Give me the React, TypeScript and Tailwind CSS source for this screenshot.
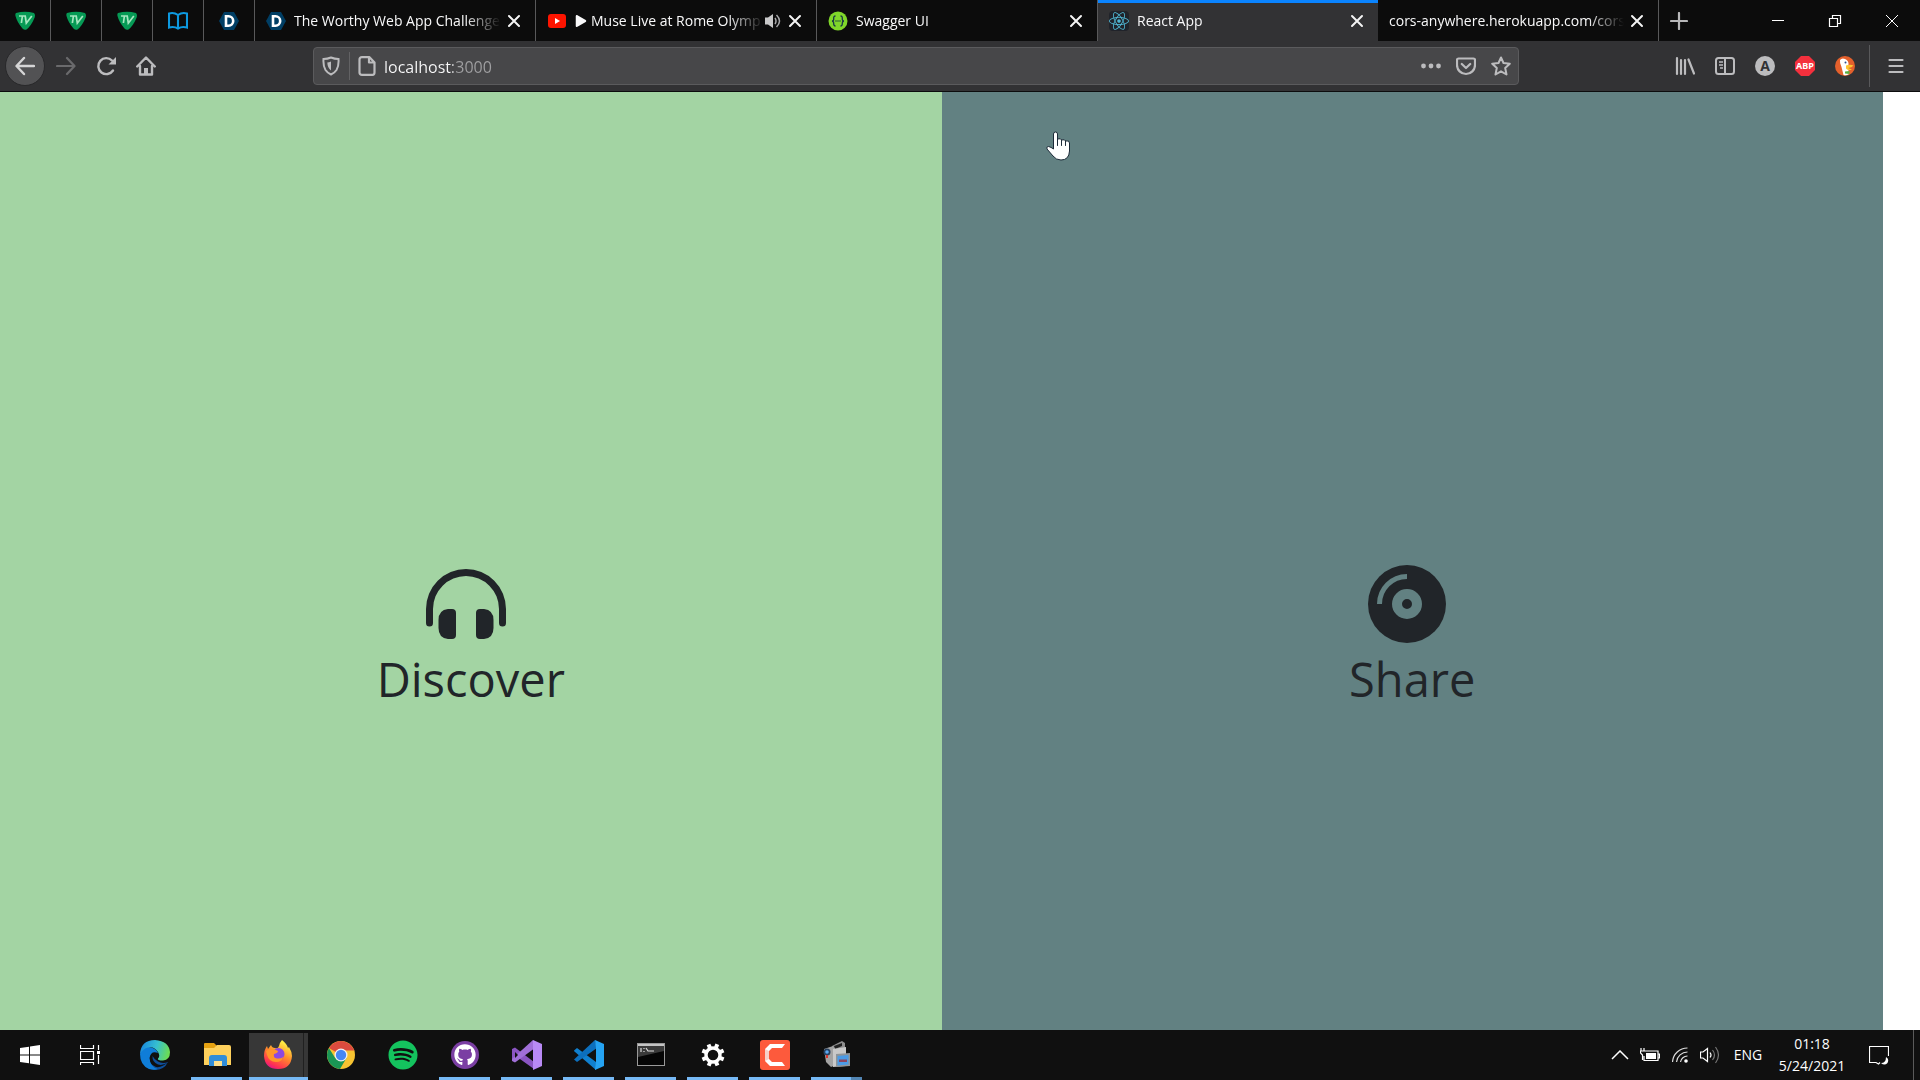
import type { ReactNode } from "react";
import { FaPlay, FaReact, FaSpotify, FaGithub } from "react-icons/fa";

function TvIcon() {
  return (
    <svg viewBox="0 0 20 20" className="size-5">
      <path d="M1 2Q10 -0.5 19 2Q21 4 19 8Q16 15 11.500 18.500Q9.500 19.500 7.500 17.500Q2 11 0.500 5Q0 3 1 2Z" fill="#069a55" />
      <path d="M4 5H11M7.400 5L6.400 12M10.300 5.500L11.300 12.200L16.800 5" fill="none" stroke="#a5e6c0" strokeWidth="1.700" />
    </svg>
  );
}

function BookIcon() {
  return (
    <svg viewBox="0 0 20 20" className="size-5" fill="none" stroke="#0d99e0" strokeWidth="2.100">
      <path d="M1 2.500Q6 1 10 4Q14 1 19 2.500V16.500Q14 15 10 17.500Q6 15 1 16.500ZM10 4V17" />
    </svg>
  );
}

function DevpostIcon() {
  return (
    <svg viewBox="0 0 20 20" className="size-5">
      <path d="M5 1H15L20 10L15 19H5L0 10Z" fill="#003e64" />
      <path d="M7 5.300H9.500A4.700 4.700 0 0 1 9.500 14.700H7Z" fill="none" stroke="#fff" strokeWidth="2.600" />
    </svg>
  );
}

function YoutubeIcon() {
  return (
    <svg viewBox="0 0 20 20" className="size-5">
      <rect x="1" y="3" width="18" height="14" rx="3" fill="#fe1400" />
      <path d="M8 7L13 10L8 13Z" fill="#fff" />
    </svg>
  );
}

function SwaggerIcon() {
  return (
    <svg viewBox="0 0 20 20" className="size-5">
      <circle cx="10" cy="10" r="9.500" fill="#7fd62a" />
      <path d="M7.500 5Q5.500 5 5.700 7.500T4 10Q5.700 10 5.700 12.500T7.500 15M12.500 5Q14.500 5 14.300 7.500T16 10Q14.300 10 14.300 12.500T12.500 15" fill="none" stroke="#173647" strokeWidth="1.300" />
      <path d="M7.500 10h1m1 0h1m1 0h1" stroke="#173647" strokeWidth="1.400" />
    </svg>
  );
}

function ReactIcon() {
  return (
    <span className="flex size-5 items-center justify-center rounded-sm bg-[#20232a]">
      <FaReact className="size-5 text-[#4fb4d0]" />
    </span>
  );
}

function CloseIcon() {
  return (
    <svg viewBox="0 0 14 14" className="size-3.5" fill="none" stroke="#f4f4f4" strokeWidth="2" strokeLinecap="round">
      <path d="M2 2L12 12M12 2L2 12" />
    </svg>
  );
}

function SoundIcon() {
  return (
    <svg viewBox="0 0 18 16" className="h-4 w-[18px] shrink-0">
      <path d="M1 4.500H4L9 1V15L4 11.500H1Z" fill="#c9c9ca" />
      <path d="M11 5Q13 8 11 11M12.500 2Q18.500 8 12.500 14" fill="none" stroke="#a8a8aa" strokeWidth="1.500" />
    </svg>
  );
}

const pinned = [
  { name: "TV 1", icon: <TvIcon /> },
  { name: "TV 2", icon: <TvIcon /> },
  { name: "TV 3", icon: <TvIcon /> },
  { name: "Docs", icon: <BookIcon /> },
  { name: "Devpost", icon: <DevpostIcon /> },
];

type TabProps = {
  title: string;
  icon?: ReactNode;
  active?: boolean;
  playing?: boolean;
};

const tabs: TabProps[] = [
  { title: "The Worthy Web App Challenge", icon: <DevpostIcon /> },
  { title: "Muse Live at Rome Olymp", icon: <YoutubeIcon />, playing: true },
  { title: "Swagger UI", icon: <SwaggerIcon /> },
  { title: "React App", icon: <ReactIcon />, active: true },
  { title: "cors-anywhere.herokuapp.com/cors" },
];

function Tab({ title, icon, active, playing }: TabProps) {
  return (
    <div
      className={
        active
          ? "flex w-[280px] min-w-0 items-center border-t-3 border-[#0a84ff] bg-[#323234] pr-3.5 pb-[3px] pl-[11px]"
          : "flex w-[281px] min-w-0 items-center border-r border-[#59595a] pr-3.5 pl-[11px]"
      }
    >
      <button className="flex min-w-0 flex-1 items-center gap-2 text-left">
        {icon}
        <span className="flex min-w-0 flex-1 items-center gap-1 overflow-hidden pt-px whitespace-nowrap [mask-image:linear-gradient(to_right,black_calc(100%-36px),transparent)]">
          {playing && <FaPlay className="size-3 shrink-0" />}
          {title}
        </span>
      </button>
      {playing && <SoundIcon />}
      <button aria-label="Close tab" className="ml-1.5 shrink-0">
        <CloseIcon />
      </button>
    </div>
  );
}

function TabBar() {
  return (
    <header className="flex h-[41px] bg-[#0c0c0c] text-sm text-[#f9f9fa]">
      {pinned.map((p) => (
        <button key={p.name} aria-label={p.name} className="flex w-[51px] shrink-0 items-center justify-center border-r border-[#59595a]">
          {p.icon}
        </button>
      ))}
      {tabs.map((t) => (
        <Tab key={t.title} {...t} />
      ))}
      <button aria-label="New tab" className="flex w-10 items-center justify-center">
        <svg viewBox="0 0 18 18" className="size-[18px]" stroke="#b8b8b9" strokeWidth="2.200" strokeLinecap="round">
          <path d="M9 1V17M1 9H17" />
        </svg>
      </button>
      <div className="ml-auto flex shrink-0">
        <button aria-label="Minimize" className="flex w-[57px] items-center justify-center">
          <svg viewBox="0 0 14 14" className="size-3.5" stroke="#fff">
            <path d="M1 6.500H13" />
          </svg>
        </button>
        <button aria-label="Restore" className="flex w-[57px] items-center justify-center">
          <svg viewBox="0 0 14 14" className="size-3.5" fill="none" stroke="#fff" strokeWidth="1.200">
            <path d="M1.500 4.500H9.500V12.500H1.500ZM4.500 4.500V1.500H12.500V9.500H9.500" />
          </svg>
        </button>
        <button aria-label="Close" className="flex w-[57px] items-center justify-center">
          <svg viewBox="0 0 14 14" className="size-3.5" stroke="#fff">
            <path d="M1 1L13 13M13 1L1 13" />
          </svg>
        </button>
      </div>
    </header>
  );
}

function ToolButton({ label, children }: { label: string; children: ReactNode }) {
  return (
    <button aria-label={label} className="flex size-10 shrink-0 items-center justify-center">
      {children}
    </button>
  );
}

function Toolbar() {
  return (
    <nav className="flex h-[51px] items-center border-b border-[#0c0c0d] bg-[#323234] pr-1 pl-[5px] text-[#bcbcbe]">
      <button aria-label="Back" className="mr-px flex size-10 shrink-0 items-center justify-center rounded-full border border-[#28282a] bg-[#525254]">
        <svg viewBox="0 0 20 20" className="size-5" fill="none" stroke="#d5d5d6" strokeWidth="2.400" strokeLinecap="round" strokeLinejoin="round">
          <path d="M19 10H2M9 2L1.500 10L9 18" />
        </svg>
      </button>
      <ToolButton label="Forward">
        <svg viewBox="0 0 20 20" className="size-5" fill="none" stroke="#6a6a6c" strokeWidth="2.200" strokeLinecap="round" strokeLinejoin="round">
          <path d="M1 10H18M11 2L18.500 10L11 18" />
        </svg>
      </ToolButton>
      <ToolButton label="Reload">
        <svg viewBox="0 0 20 20" className="size-5" fill="none" stroke="currentColor" strokeWidth="2.400" strokeLinecap="round">
          <path d="M17 14.500A8 8 0 1 1 16 4.500" />
          <path d="M20 1V8.500H12.500Z" fill="currentColor" stroke="none" />
        </svg>
      </ToolButton>
      <ToolButton label="Home">
        <svg viewBox="0 0 20 20" className="size-5" fill="none" stroke="currentColor" strokeWidth="2.400" strokeLinejoin="round" strokeLinecap="round">
          <path d="M1.200 10.500L10 1.500L18.800 10.500M4 10V18.500H16V10" />
          <path d="M8 12H12V18H8Z" fill="currentColor" stroke="none" />
        </svg>
      </ToolButton>

      <div className="mr-[146px] ml-[147px] flex h-[38px] min-w-0 flex-1 items-center rounded-sm border border-[#5b5b5d] bg-[#474749]">
        <button aria-label="Tracking protection" className="flex h-7 w-9 shrink-0 items-center justify-center border-r border-[#626264] pr-px">
          <svg viewBox="0 0 18 20" className="h-5 w-[18px]" fill="none" stroke="currentColor" strokeWidth="2">
            <path d="M9 1.500Q12.500 3 16.500 3Q17 10 14.500 14Q12.500 17 9 18.500Q5.500 17 3.500 14Q1 10 1.500 3Q5.500 3 9 1.500Z" />
            <path d="M9 5.500V14.500Q5.500 12 5.300 6.500Q7 6.500 9 5.500Z" fill="currentColor" stroke="none" />
          </svg>
        </button>
        <button aria-label="Site information" className="flex w-[34px] shrink-0 items-center justify-center">
          <svg viewBox="0 0 18 20" className="h-5 w-[18px]" fill="none" stroke="currentColor" strokeWidth="2.200" strokeLinejoin="round">
            <path d="M4 1.200H11.500L16.500 6.500V16.500Q16.500 18.800 14.500 18.800H4Q1.500 18.800 1.500 16.500V3.500Q1.500 1.200 4 1.200ZM11 1.500V6.500H16.500" />
          </svg>
        </button>
        <input
          type="text"
          aria-label="Address"
          defaultValue="localhost:3000"
          className="min-w-0 flex-1 bg-[linear-gradient(to_right,#f9f9fa_69px,#a0a0a2_69px)] bg-clip-text pt-0.5 text-base text-transparent outline-none"
        />
        <button aria-label="Page actions" className="flex w-[35px] shrink-0 items-center justify-center">
          <svg viewBox="0 0 20 20" className="size-5" fill="currentColor">
            <circle cx="2.500" cy="10" r="2.400" />
            <circle cx="10" cy="10" r="2.400" />
            <circle cx="17.500" cy="10" r="2.400" />
          </svg>
        </button>
        <button aria-label="Save to Pocket" className="flex w-[35px] shrink-0 items-center justify-center">
          <svg viewBox="0 0 20 20" className="size-5" fill="none" stroke="currentColor" strokeWidth="2.200" strokeLinejoin="round" strokeLinecap="round">
            <path d="M2.500 2.500H17.500Q19 2.500 19 4V9A9 9 0 0 1 1 9V4Q1 2.500 2.500 2.500ZM5.800 8L10 12L14.200 8" />
          </svg>
        </button>
        <button aria-label="Bookmark" className="flex w-[35px] shrink-0 items-center justify-center">
          <svg viewBox="0 0 20 20" className="size-5" fill="none" stroke="currentColor" strokeWidth="2" strokeLinejoin="round">
            <path d="M10 1.500L12.500 7L18.800 7.700L14.200 12L15.500 18.500L10 15.300L4.500 18.500L5.800 12L1.200 7.700L7.500 7Z" />
          </svg>
        </button>
      </div>

      <ToolButton label="Library">
        <svg viewBox="0 0 20 20" className="size-5" fill="none" stroke="currentColor" strokeWidth="2.200" strokeLinecap="round">
          <path d="M2 2V18M6 4V18M10 4V18M13.500 3.500L19 17.500" />
        </svg>
      </ToolButton>
      <ToolButton label="Sidebars">
        <svg viewBox="0 0 20 20" className="size-5" fill="none" stroke="currentColor" strokeWidth="2">
          <rect x="1" y="2" width="18" height="16" rx="2.500" />
          <path d="M10 2V18" />
          <path d="M4 6H8M4 9H8M5 12H8" strokeWidth="1.300" />
        </svg>
      </ToolButton>
      <ToolButton label="Account">
        <span className="flex size-5 items-center justify-center rounded-full bg-[#bcbcbe] text-sm font-bold text-[#323234]">A</span>
      </ToolButton>
      <ToolButton label="Adblock Plus">
        <span className="flex size-5 items-center justify-center bg-[#f4303d] font-['Noto_Sans',sans-serif] text-[9px] font-bold text-white [clip-path:polygon(30%_0,70%_0,100%_30%,100%_70%,70%_100%,30%_100%,0_70%,0_30%)]">
          ABP
        </span>
      </ToolButton>
      <ToolButton label="DuckDuckGo">
        <svg viewBox="0 0 20 20" className="size-5">
          <circle cx="10" cy="10" r="10" fill="#e4602c" />
          <path d="M5 4Q7 1.500 10 3Q14 4.500 13.500 9L13 12L14 18Q11.500 20 8.500 19L6.500 11Q4.500 7 5 4Z" fill="#fff" />
          <path d="M11 9.500Q15 8 18.500 9.500Q17 11.500 13 12L17 13.500Q13 15 11 12.500Z" fill="#fdc52f" />
          <circle cx="10.500" cy="6.500" r="1" fill="#2d4f8e" />
          <path d="M10 15.500L14.500 15V18L10 17.500Z" fill="#5aae3f" />
        </svg>
      </ToolButton>
      <span className="ml-1 h-[42px] w-px shrink-0 bg-[#59595b]" />
      <button aria-label="Menu" className="ml-1.5 flex size-10 shrink-0 items-center justify-center">
        <svg viewBox="0 0 16 16" className="size-4" stroke="currentColor" strokeWidth="2.200" strokeLinecap="round">
          <path d="M1.500 2H14.500M1.500 8H14.500M1.500 14H14.500" />
        </svg>
      </button>
    </nav>
  );
}

function Landing() {
  return (
    <main className="relative flex flex-1 bg-white pr-[37px] text-[#212529]">
      <a href="#discover" className="flex-1 bg-[#a3d4a3]">
        <div className="flex flex-col items-center pt-[50%]">
          <svg viewBox="0 0 80 80" className="mr-2.5 size-20" fill="currentColor">
            <path d="M3.500 63.500A3.500 3.500 0 0 1 0 60V46A40 40 0 0 1 80 46V60A3.500 3.500 0 0 1 73 60V46A33 33 0 0 0 7 46V60A3.500 3.500 0 0 1 3.500 63.500Z" />
            <path d="M22 46H26Q30 46 30 50V72Q30 76 26 76H22Q12.500 75 12.500 65V57Q12.500 47 22 46ZM58 46H54Q50 46 50 50V72Q50 76 54 76H58Q67.500 75 67.500 65V57Q67.500 47 58 46Z" />
          </svg>
          <span className="mt-1.5 text-[47px] leading-[60px]">Discover</span>
        </div>
      </a>
      <a href="#share" className="flex-1 bg-[#628182]">
        <div className="flex flex-col items-center pt-[50%]">
          <svg viewBox="0 0 80 80" className="mr-2.5 size-20">
            <circle cx="40" cy="41" r="39" fill="currentColor" />
            <circle cx="40" cy="41" r="10" fill="none" stroke="#628182" strokeWidth="10" />
            <path d="M12.500 41A27.500 27.500 0 0 1 40 13.500" fill="none" stroke="#628182" strokeWidth="5" />
          </svg>
          <span className="mt-1.5 text-[47px] leading-[60px]">Share</span>
        </div>
      </a>
      <svg viewBox="0 0 24 30" className="absolute top-[39px] left-[1046px] h-[30px] w-6">
        <path
          d="M7.500 18V3Q7.500 1 9.500 1T11.500 3V8Q15 7 15.500 9Q19 8 19.500 10Q23.500 9 23.500 12V20Q23 29 15 29Q10 29 7 25L1 18Q0 15.500 2.500 15.500Q5 16 7.500 18Z"
          fill="#fff"
          stroke="#1c2a38"
          strokeLinejoin="round"
        />
        <path d="M11.500 8V14.500M15.500 9V14.500M19.500 10V14.500" stroke="#1c2a38" strokeLinecap="round" />
      </svg>
    </main>
  );
}

function EdgeLogo() {
  return (
    <svg viewBox="0 0 30 30" className="size-[30px]">
      <defs>
        <linearGradient id="edge-top" x1="0" y1="0.200" x2="1" y2="0.400">
          <stop offset="0.100" stopColor="#1c8fdc" />
          <stop offset="0.550" stopColor="#36bfd0" />
          <stop offset="1" stopColor="#6bdc55" />
        </linearGradient>
      </defs>
      <path d="M9 15Q8 24 16 27Q22 28 28 22Q24 30 15 30Q5 29 3 20Z" fill="#0e4f9c" />
      <path d="M0 14Q2 6 9 7Q16 8 18 13Q11 10 9.500 18Q10 27 18 29Q14 30.500 9 29Q0 25 0 14Z" fill="#0f7dd8" />
      <path d="M0 14Q1 0 15 0Q29 1 30 12Q30 20 23 20.500Q17 20.500 18 18.500Q20.500 16 18 12Q14 6 8 7.500Q3 8.500 0 14Z" fill="url(#edge-top)" />
      <path d="M12.500 16Q12 22 18 24.500Q23 26 28.500 22Q22 24 18 21.500Q14 19 12.500 16Z" fill="#0e4f9c" />
    </svg>
  );
}

function ExplorerLogo() {
  return (
    <svg viewBox="0 0 30 30" className="size-[30px]">
      <path d="M2 4Q2 3 3 3H12L15 6V10H2Z" fill="#e5a111" />
      <path d="M2 8H12L15 5H27Q29 5 29 7V25H2Z" fill="#fdd05c" />
      <path d="M7 26V18Q7 15 10 15H22Q25 15 25 18V26H20V21H12V26Z" fill="#308dd9" />
      <path d="M12 21H20V26H12Z" fill="#fde08c" />
    </svg>
  );
}

function FirefoxLogo() {
  return (
    <svg viewBox="0 0 30 30" className="size-[30px]">
      <defs>
        <linearGradient id="fox" x1="0.800" y1="0" x2="0.300" y2="1">
          <stop offset="0.100" stopColor="#fff044" />
          <stop offset="0.500" stopColor="#ff8a2b" />
          <stop offset="0.850" stopColor="#ff3350" />
          <stop offset="1" stopColor="#e31587" />
        </linearGradient>
      </defs>
      <path d="M19 0Q24 4 25 8L26 7Q29 12 29 16Q28 29 15 29Q2 29 1 16Q1 10 4 6L5 9L8 5Q9 8 12 8Q15 9 16 6Q17 2 19 0Z" fill="url(#fox)" />
      <circle cx="15.500" cy="14" r="6" fill="#8c48e0" />
      <path d="M3 11Q8 7 15 11Q15 13 11 14Q10 18 14 18.500Q18 19 20 17Q19 22 13 22Q6 22 4 15Z" fill="#ff9629" />
    </svg>
  );
}

function ChromeLogo() {
  return (
    <svg viewBox="0 0 30 30" className="size-[30px]">
      <circle cx="15" cy="15" r="14" fill="#f7c331" />
      <path d="M15 15L2.900 8A14 14 0 0 1 27.100 8Q28 10 28.500 10.500H15Z" fill="#dc4b3e" />
      <path d="M2.900 8A14 14 0 0 0 14 29L20.500 18L15 15L9.500 18.500Z" fill="#1a9655" />
      <circle cx="15" cy="15" r="6.500" fill="#f1f1f1" />
      <circle cx="15" cy="15" r="5.200" fill="#4587f3" />
    </svg>
  );
}

function VisualStudioLogo() {
  return (
    <svg viewBox="0 0 30 30" className="size-[30px]">
      <path d="M0 9L3 7.500L22 22V29L3 15.500L3 19.500L0 21Z" fill="#8a55c2" />
      <path d="M3 22.500L0 21V19L21 0L23 8Z" fill="#a06fd8" />
      <path d="M3 12V18L6 15Z" fill="#101010" />
      <path d="M21 0L30 4V26L21 30Z" fill="#b98af5" />
    </svg>
  );
}

function VsCodeLogo() {
  return (
    <svg viewBox="0 0 30 30" className="size-[30px]">
      <path d="M0 10.500L3 8L22 22V30L0.500 11.500Z" fill="#1080cf" />
      <path d="M0 19.500L3 22L23 8L21 0Z" fill="#0c6fbd" />
      <path d="M21 0L30 4V26L21 30L22 22V8Z" fill="#25a3f2" />
    </svg>
  );
}

function TerminalLogo() {
  return (
    <svg viewBox="0 0 30 30" className="size-[30px]">
      <rect x="1.500" y="3.500" width="27" height="22" fill="#050505" stroke="#999" />
      <path d="M2 4H28V6H2Z" fill="#c4c4c4" />
      <path d="M2 6H28V11L2 17Z" fill="#3a3a3a" />
      <path d="M5 8V12M8 8V9M8 11V12M10 8L12 11H18" fill="none" stroke="#ddd" strokeWidth="1.200" />
    </svg>
  );
}

const teeth = [0, 45, 90, 135, 180, 225, 270, 315];

function SettingsLogo() {
  return (
    <svg viewBox="0 0 30 30" className="size-[30px]">
      <circle cx="15" cy="15" r="7" fill="none" stroke="#fff" strokeWidth="3.400" />
      {teeth.map((a) => (
        <rect key={a} x="13" y="3.500" width="4" height="4" fill="#fff" transform={`rotate(${a + 22} 15 15)`} />
      ))}
    </svg>
  );
}

function CamtasiaLogo() {
  return (
    <svg viewBox="0 0 30 30" className="size-[30px]">
      <rect width="30" height="30" rx="3" fill="#fd5a3c" />
      <path d="M25 4H10L5 9V21L10 26H25L22 22H12L9 19V11L12 8H22Z" fill="#fff" />
      <path d="M5 9L9 11V19L5 21Z" fill="#f7cfc6" />
    </svg>
  );
}

function CamcorderLogo() {
  return (
    <svg viewBox="0 0 30 30" className="size-[30px]">
      <path d="M10 6L20 1L23 3V9L12 12Z" fill="#8d8d8d" />
      <path d="M12 6L20 3V6L13 9Z" fill="#202020" />
      <path d="M2 9L11 6L14 10V25L9 27L4 22Z" fill="#a3a3a3" />
      <path d="M11 9L24 7V26L11 27Z" fill="#c9c9c9" />
      <circle cx="5" cy="12" r="3.500" fill="#27415f" />
      <circle cx="5" cy="12" r="1.800" fill="#5ca9f0" />
      <path d="M4 15H6V18H4Z" fill="#d8362e" />
      <path d="M14 14L28 13V26L14 27Z" fill="#8e9499" />
      <path d="M15.500 16L26.500 15V24.500L15.500 25.500Z" fill="#4b9be6" />
      <path d="M17 19.500H25V22H17Z" fill="#8c4560" />
    </svg>
  );
}

const apps = [
  { name: "Microsoft Edge", logo: <EdgeLogo /> },
  { name: "File Explorer", logo: <ExplorerLogo />, open: true },
  { name: "Firefox", logo: <FirefoxLogo />, open: true, focused: true },
  { name: "Chrome", logo: <ChromeLogo /> },
  { name: "Spotify", logo: <FaSpotify className="size-[30px] text-[#14c35e]" /> },
  {
    name: "GitHub Desktop",
    logo: (
      <span className="flex size-7 items-center justify-center rounded-full bg-[#7b3fa3]">
        <FaGithub className="size-[22px] text-white" />
      </span>
    ),
    open: true,
  },
  { name: "Visual Studio", logo: <VisualStudioLogo />, open: true },
  { name: "Visual Studio Code", logo: <VsCodeLogo />, open: true },
  { name: "Command Prompt", logo: <TerminalLogo />, open: true },
  { name: "Settings", logo: <SettingsLogo />, open: true },
  { name: "Camtasia", logo: <CamtasiaLogo />, open: true },
  { name: "Camera Recorder", logo: <CamcorderLogo />, open: true, stacked: true },
];

function AppButton({ app }: { app: (typeof apps)[number] }) {
  if (app.focused) {
    return (
      <button aria-label={app.name} className="flex w-[59px] flex-col border-t-3 border-[#101010] bg-[#373737]">
        <span className="flex flex-1 items-stretch">
          <span className="flex flex-1 items-center justify-center pl-1">{app.logo}</span>
          <span className="w-[5px] border-l border-[#202020]" />
        </span>
        <span className="h-[3px] w-full bg-[#76b9f5]" />
      </button>
    );
  }
  return (
    <button aria-label={app.name} className="flex w-[59px] flex-col items-center pt-[3px]">
      <span className="flex flex-1 items-center">{app.logo}</span>
      <span className={app.open ? "flex h-[3px] w-[51px] bg-[#76b9f5]" : "h-[3px]"}>
        {app.stacked && <span className="ml-auto w-[11px] bg-[#5285b3]" />}
      </span>
    </button>
  );
}

function Taskbar() {
  return (
    <footer className="flex h-[50px] items-stretch bg-[#101010] text-sm text-white">
      <button aria-label="Start" className="flex w-[60px] shrink-0 items-center justify-center">
        <svg viewBox="0 0 20 20" className="size-5" fill="#fff">
          <path d="M0 3L9 1.700V9.500H0ZM10 1.500L20 0V9.500H10ZM0 10.500H9V18.300L0 17ZM10 10.500H20V20L10 18.500Z" />
        </svg>
      </button>
      <button aria-label="Task view" className="flex w-[60px] shrink-0 items-center justify-center">
        <svg viewBox="0 0 20 20" className="size-5" fill="none" stroke="#fff" strokeWidth="1.200">
          <path d="M0.500 0V3.500H13.500V0M0.500 6.500H13.500V14.500H0.500ZM0.500 20V17.500H13.500V20M18.500 0V5M18.500 10V19" />
          <path d="M17 6H20V9H17Z" fill="#fff" stroke="none" />
        </svg>
      </button>
      <div className="ml-[5px] flex gap-[3px]">
        {apps.map((app) => (
          <AppButton key={app.name} app={app} />
        ))}
      </div>

      <div className="ml-auto flex items-center">
        <button aria-label="Show hidden icons" className="flex w-[30px] justify-center">
          <svg viewBox="0 0 18 10" className="h-2.5 w-[18px]" fill="none" stroke="#fff" strokeWidth="1.500">
            <path d="M1 9L9 1L17 9" />
          </svg>
        </button>
        <button aria-label="Battery" className="flex w-[30px] justify-center">
          <svg viewBox="0 0 20 14" className="h-3.5 w-5" fill="none" stroke="#fff" strokeWidth="1.200">
            <path d="M5 3H18V12.500H4V8M18 6H19.500V10H18M0 3H5M1 0V3M4 0V3M0.500 3V5L2.500 7V12" />
            <path d="M6 5H16V11H6Z" fill="#fff" stroke="none" />
          </svg>
        </button>
        <button aria-label="Wi-Fi" className="flex w-[30px] justify-center">
          <svg viewBox="0 0 16 16" className="size-4" fill="none" stroke="#ddd" strokeWidth="1.200">
            <path d="M0.500 15A15 15 0 0 1 15.500 1M4.500 15A11 11 0 0 1 15.500 5M8.500 15A7 7 0 0 1 15.500 9" />
            <circle cx="14" cy="14" r="1.800" fill="#fff" stroke="none" />
          </svg>
        </button>
        <button aria-label="Volume" className="flex w-[30px] justify-center">
          <svg viewBox="0 0 20 18" className="h-[18px] w-5" fill="none" stroke="#fff" strokeWidth="1.200">
            <path d="M0.500 6H3L7.500 2.500V15.500L3 12H0.500Z" />
            <path d="M10 6.500Q12 9 10 11.500" />
            <path d="M12.500 4Q16.500 9 12.500 14M15.500 1Q21.500 9 15.500 17" stroke="#777" />
          </svg>
        </button>
        <button className="w-[46px] text-center">ENG</button>
        <button className="flex w-[82px] flex-col items-center leading-[22px]">
          <span>01:18</span>
          <span>5/24/2021</span>
        </button>
        <button aria-label="Notifications" className="flex w-[60px] justify-center pr-2">
          <svg viewBox="0 0 20 20" className="size-5" fill="none" stroke="#fff" strokeWidth="1.200">
            <path d="M11 17.500L9.500 19L7 17.500H0.500V1.500H19.500V11" />
            <path d="M17 12Q20.500 14 18.500 18Q15.500 21 12 18Q17 18 17 12Z" fill="#fff" stroke="none" />
          </svg>
        </button>
        <button aria-label="Show desktop" className="h-[50px] w-[7px] border-l border-[#5a5a5a]" />
      </div>
    </footer>
  );
}

export default function App() {
  return (
    <div className="flex min-h-screen flex-col font-['Open_Sans','Noto_Sans',sans-serif]">
      <TabBar />
      <Toolbar />
      <Landing />
      <Taskbar />
    </div>
  );
}
